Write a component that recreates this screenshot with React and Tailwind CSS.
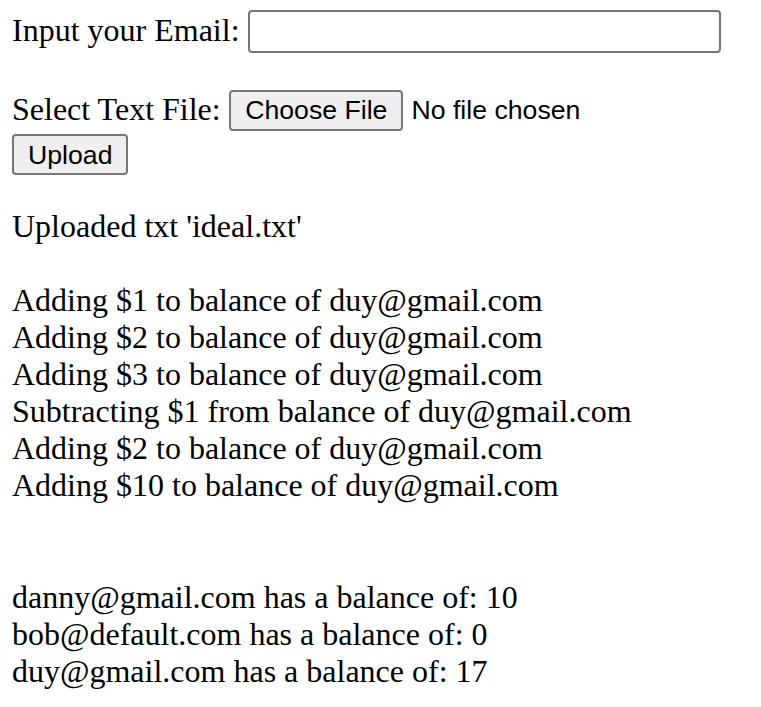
const transactions = [
  "Adding $1 to balance of duy@gmail.com",
  "Adding $2 to balance of duy@gmail.com",
  "Adding $3 to balance of duy@gmail.com",
  "Subtracting $1 from balance of duy@gmail.com",
  "Adding $2 to balance of duy@gmail.com",
  "Adding $10 to balance of duy@gmail.com",
];

const balances = [
  { email: "danny@gmail.com", amount: 10 },
  { email: "bob@default.com", amount: 0 },
  { email: "duy@gmail.com", amount: 17 },
];

const btn =
  "h-[41.5px] border-2 border-[#767676] rounded-[4px] bg-[#efefef] text-black font-['Liberation_Sans',Arial,sans-serif] text-[26.67px] leading-[30px]";

export default function App() {
  return (
    <div className="min-h-screen bg-white pl-[12px] pt-[10px] font-['Liberation_Serif','Times_New_Roman',serif] text-[32px] leading-[37px] text-black">
      <form onSubmit={(e) => e.preventDefault()}>
        {/* email row */}
        <div className="flex items-start h-[42.67px]">
          <label className="pt-[1.7px] whitespace-nowrap">Input your Email:</label>
          <input
            type="email"
            className="ml-[8.5px] w-[473.4px] h-[42.67px] border-2 border-[#767676] rounded-[4px] bg-white px-[4px] font-['Liberation_Sans',Arial,sans-serif] text-[26.67px] outline-none"
          />
        </div>

        <div className="h-[37px]" />

        {/* file row */}
        <div className="flex items-start h-[42.67px]">
          <label className="pt-[1.5px] whitespace-nowrap">Select Text File:</label>
          <button type="button" className={`${btn} ml-[8.5px] px-[14px]`}>
            Choose File
          </button>
          <span className="ml-[8px] h-[41.5px] flex items-center font-['Liberation_Sans',Arial,sans-serif] text-[26.67px] leading-[30px] whitespace-nowrap">
            No file chosen
          </span>
        </div>

        <div className="h-[42.67px]">
          <button type="submit" className={`${btn} mt-[1.5px] px-[14px]`}>
            Upload
          </button>
        </div>
      </form>

      <p className="mt-[33.5px]">Uploaded txt 'ideal.txt'</p>

      <div className="mt-[37px]">
        {transactions.map((t, i) => (
          <div key={i}>{t}</div>
        ))}
      </div>

      <div className="mt-[74.5px]">
        {balances.map((b) => (
          <div key={b.email}>
            {b.email} has a balance of: {b.amount}
          </div>
        ))}
      </div>
    </div>
  );
}
